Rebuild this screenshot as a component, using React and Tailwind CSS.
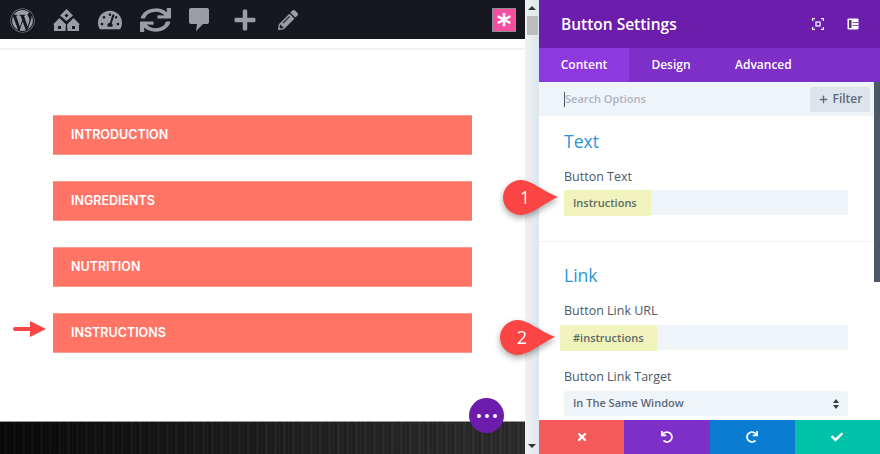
import React from "react";
import { Plus } from "lucide-react";
import { FaWordpress, FaSync, FaTachometerAlt, FaPlus, FaPencilAlt, FaTimes, FaUndo, FaRedo, FaCheck } from "react-icons/fa";

const Bar = ({ children }) => (
  <div className="h-10 bg-[#ff7465] border-y border-[#ff9a8f] pl-[18px] flex items-center text-white text-[12.5px] font-semibold font-['Inter','sans-serif']">
    <span>{children}</span>
  </div>
);

const Pin = ({ n, first }) => (
  <div className={`absolute z-10 w-[55px] h-[35px] drop-shadow-[0_3px_3px_rgba(0,0,0,0.35)] ${first ? "left-[-61px] top-[-10px]" : "left-[-64px] top-[-5px]"}`}>
    <svg viewBox="0 0 55 35" className="w-full h-full absolute inset-0">
      <path d="M18 0C28 0 38 10 55 17C38 25 28 35 18 35C8 35 0 27 0 17.5C0 8 8 0 18 0Z" fill="#fb4444" />
    </svg>
    <span className="absolute left-0 top-0 w-[44px] h-[35px] flex items-center justify-center text-white text-[18px]">{n}</span>
  </div>
);

export default function App() {
  return (
    <div className="w-[880px] h-[454px] overflow-hidden flex bg-white font-['Open_Sans','sans-serif']">
      <div className="w-[525px] flex flex-col relative">
        <div className="h-[39px] bg-[#15191f] flex items-center relative shrink-0 text-[#9a9da2]">
          <FaWordpress size={25} className="ml-[10px] mt-[2px]" />
          <svg viewBox="0 0 27 22" width="27" height="22" className="ml-[18px]" fill="#9a9da2">
            <path fillRule="evenodd" d="M13.5 0L20 6.5 13.5 12 7 6.5zM13.5 4.5l-2 2 2 2 2-2z" />
            <path fillRule="evenodd" d="M6.5 9L13 15.5 12.5 22H1V15.5H0zM5 17v3h3v-3z" />
            <path fillRule="evenodd" d="M20.5 9L27 15.5H26V22H14.5L14 15.5zM19 17v3h3v-3z" />
          </svg>
          <FaTachometerAlt size={24} className="ml-[18px] mt-[1px]" />
          <FaSync preserveAspectRatio="none" className="ml-[18px] w-[31px] h-[24px]" />
          <svg viewBox="0 0 20 23" width="20" height="23" className="ml-[18px]" fill="#9a9da2">
            <path d="M2 0h16a2 2 0 0 1 2 2v12a2 2 0 0 1-2 2h-4l-7 7 1-7H2a2 2 0 0 1-2-2V2a2 2 0 0 1 2-2z" />
          </svg>
          <FaPlus size={24} className="ml-[24px]" />
          <FaPencilAlt size={20} className="ml-[21px]" />
          <div className="absolute right-[9px] top-[8px] w-6 h-6 bg-[#f74fa0] border border-[#8d8d95] flex items-center justify-center">
            <span className="text-white text-[28px] font-bold leading-none font-['DejaVu_Sans','sans-serif'] mt-[9px]">*</span>
          </div>
        </div>
        <div className="h-[11px] border-b-2 border-[#f1f1f1] shrink-0" />
        <div className="flex-1 pt-[65px] px-[53px] flex flex-col gap-[26px]">
          <Bar>INTRODUCTION</Bar>
          <Bar>INGREDIENTS</Bar>
          <Bar>NUTRITION</Bar>
          <div className="relative">
            <Bar>INSTRUCTIONS</Bar>
            <svg viewBox="0 0 33 16" className="absolute left-[-40px] top-[8px] w-[33px] h-4">
              <path d="M2 8h16" stroke="#fb4444" strokeWidth="4" strokeLinecap="round" />
              <path d="M17 0l16 8-16 8z" fill="#fb4444" />
            </svg>
          </div>
        </div>
        <div className="h-[33px] shrink-0 border-t border-[#999] bg-[repeating-linear-gradient(90deg,rgba(255,255,255,0.04)_0px,rgba(0,0,0,0.15)_3px,rgba(255,255,255,0.05)_5px,rgba(0,0,0,0.1)_9px),linear-gradient(90deg,#050505,#1f1f1f_60%,#2b2b2b)]" />
        <div className="absolute left-[469px] top-[398px] w-[35px] h-[35px] rounded-full bg-[#6c1dab] flex items-center justify-center gap-[4px]">
          <span className="w-1 h-1 rounded-full bg-white" />
          <span className="w-1 h-1 rounded-full bg-white" />
          <span className="w-1 h-1 rounded-full bg-white" />
        </div>
      </div>

      <div className="w-[14px] bg-gradient-to-r from-[#f1f1f1] to-[#dce6ef] flex flex-col items-center shrink-0 relative">
        <div className="h-4 flex items-center justify-center">
          <div className="w-0 h-0 border-x-4 border-x-transparent border-b-[4px] border-b-[#333]" />
        </div>
        <div className="w-[11px] h-[19px] bg-[#bdbdbd]" />
        <div className="flex-1" />
        <div className="h-4 flex items-center justify-center">
          <div className="w-0 h-0 border-x-4 border-x-transparent border-t-[4px] border-t-[#333]" />
        </div>
      </div>

      <div className="w-[341px] flex flex-col shrink-0 relative">
        <div className="h-[48px] bg-[#6c1dab] flex items-center pl-[22px] pr-[21px] text-white shrink-0">
          <span className="text-[15.5px] font-semibold flex-1 mt-[1px]">Button Settings</span>
          <svg viewBox="0 0 12 12" className="w-3 h-3 mr-[23px]" fill="none" stroke="white" strokeWidth="1.2">
            <path d="M0.6 3V0.6H3M9 0.6h2.4V3M11.4 9v2.4H9M3 11.4H0.6V9" />
            <rect x="4" y="4" width="4" height="4" />
          </svg>
          <svg viewBox="0 0 12 12" className="w-3 h-3" fill="none">
            <rect x="0.5" y="0.5" width="11" height="11" rx="1" fill="white" />
            <rect x="2" y="2" width="2.5" height="8" fill="#6c1dab" />
            <path d="M5.5 4.5h6M5.5 7.5h6" stroke="#6c1dab" strokeWidth="0.8" />
          </svg>
        </div>
        <div className="h-[34px] bg-[#7e2fc8] flex text-white text-[12px] font-semibold shrink-0">
          <div className="w-[90px] bg-[#8e38e0] flex items-center justify-center">Content</div>
          <div className="w-[84px] flex items-center justify-center">Design</div>
          <div className="pl-[22px] flex items-center">Advanced</div>
        </div>
        <div className="flex-1 flex min-h-0">
          <div className="flex-1 flex flex-col min-w-0">
            <div className="h-[34px] bg-[#eff4f8] flex items-center pl-[25px] pr-[4px] shrink-0">
              <div className="w-px h-[15px] bg-[#4c5866]" />
              <span className="text-[11px] font-semibold text-[#a9b5c4] flex-1">Search Options</span>
              <div className="w-[60px] h-[25px] bg-[#dde4ec] rounded-[3px] flex items-center justify-center gap-[4px] text-[12px] font-semibold text-[#5c6a7a]">
                <Plus size={11} strokeWidth={3} />
                <span>Filter</span>
              </div>
            </div>
            <div className="flex-1 min-h-0 px-[25px] pt-[13px]">
              <div className="text-[17.5px] text-[#2b94dc] leading-[24px]">Text</div>
              <div className="text-[12.5px] font-medium text-[#4c5866] mt-[15px] leading-[18px]">Button Text</div>
              <div className="relative mt-[4px] h-[25px] w-[284px] bg-[#eff4f8] rounded-[3px]">
                <div className="absolute left-0 top-0 h-[26px] w-[87px] bg-[#f0f3bb] flex items-center pl-[9px] text-[11px] font-semibold text-[#5c6a66]">Instructions</div>
                <Pin n="1" first />
              </div>
              <div className="border-t border-[#eff2f5] mx-[-25px] mt-[26px]" />
              <div className="text-[17.5px] text-[#2b94dc] leading-[24px] mt-[21px]">Link</div>
              <div className="text-[12.5px] font-medium text-[#4c5866] mt-[15px] leading-[18px]">Button Link URL</div>
              <div className="relative mt-[5px] h-[25px] w-[284px] bg-[#eff4f8] rounded-[3px]">
                <div className="absolute left-[-4px] top-0 h-[26px] w-[97px] bg-[#f0f3bb] flex items-center pl-[13px] text-[11px] font-semibold text-[#5c6a66]">#instructions</div>
                <Pin n="2" />
              </div>
              <div className="text-[12.5px] font-medium text-[#4c5866] mt-[18px] leading-[18px]">Button Link Target</div>
              <div className="relative mt-[5px] h-[25px] w-[284px] bg-[#eff4f8] rounded-[3px] flex items-center pl-[9px] text-[11px] font-semibold text-[#5c6a7a]">
                In The Same Window
                <div className="absolute right-[9px] top-[8px] flex flex-col gap-[2px]">
                  <div className="w-0 h-0 border-x-[3px] border-x-transparent border-b-[4px] border-b-[#333d49]" />
                  <div className="w-0 h-0 border-x-[3px] border-x-transparent border-t-[4px] border-t-[#333d49]" />
                </div>
              </div>
            </div>
          </div>
          <div className="w-[6px] shrink-0 flex flex-col">
            <div className="h-[200px] bg-[#4c5866]" />
            <div className="flex-1 bg-white" />
          </div>
        </div>
        <div className="h-[34px] flex shrink-0 text-white relative">
          <div className="flex-1 bg-[#f45a5a] flex items-center justify-center"><FaTimes size={12} /></div>
          <div className="flex-1 bg-[#7e2fc8] flex items-center justify-center"><FaUndo size={12} /></div>
          <div className="flex-1 bg-[#0a7dd3] flex items-center justify-center"><FaRedo size={12} /></div>
          <div className="flex-1 bg-[#00c2a8] flex items-center justify-center"><FaCheck size={12} /></div>
        </div>
      </div>
    </div>
  );
}
